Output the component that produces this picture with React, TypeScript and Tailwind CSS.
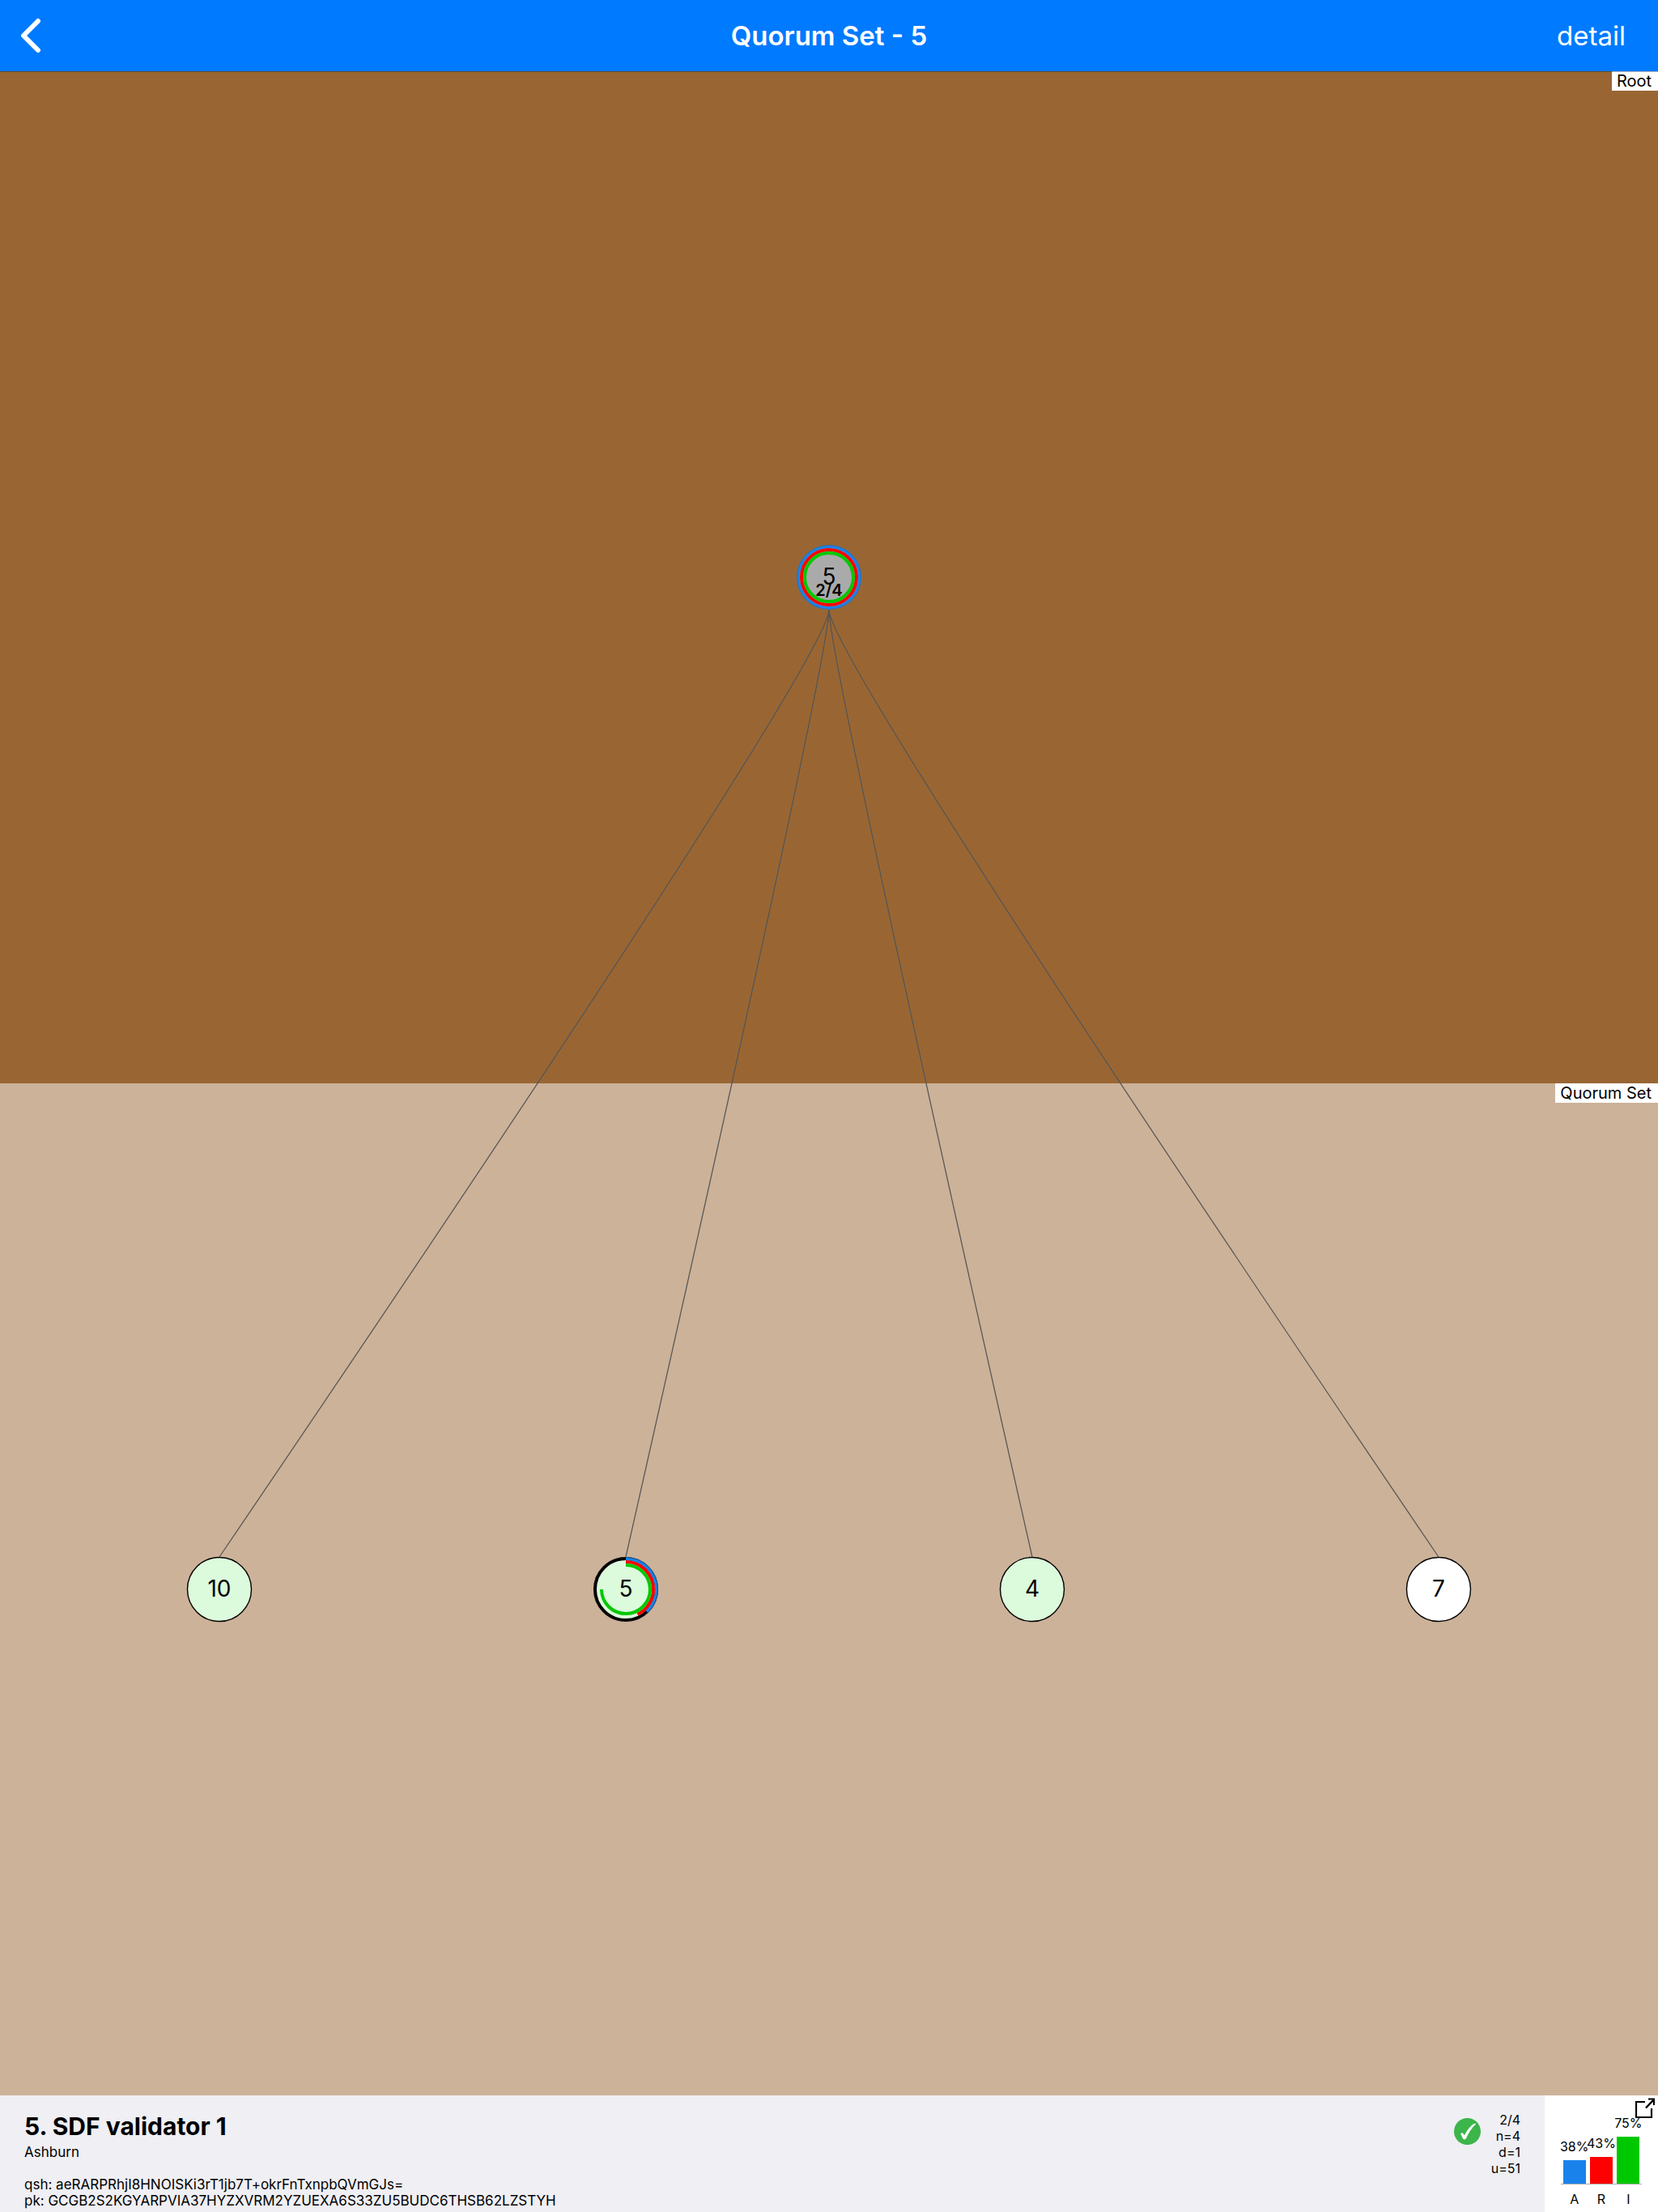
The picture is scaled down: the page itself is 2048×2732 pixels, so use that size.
import React from "react";

type Metric = { label: string; name: string; percent: number; color: string };

const METRICS: Metric[] = [
  { label: "A", name: "Active", percent: 38, color: "#1982eb" },
  { label: "R", name: "Overloaded", percent: 43, color: "#ff0000" },
  { label: "I", name: "Validating", percent: 75, color: "#00c800" },
];

const FULL_RINGS = METRICS.map((m) => ({ color: m.color, percent: 100 }));

type Ring = { color: string; percent: number };

type NodeProps = {
  label: string;
  fill: string;
  outline?: string;
  track?: boolean;
  rings?: Ring[];
  threshold?: string;
};

function RingArc({ ring, index }: { ring: Ring; index: number }) {
  const r = 38 - index * 4;
  return (
    <circle
      cx={40}
      cy={40}
      r={r}
      fill="none"
      stroke={ring.color}
      strokeWidth={4}
      pathLength={100}
      strokeDasharray={ring.percent === 100 ? undefined : `${ring.percent} 100`}
      transform="rotate(-90 40 40)"
    />
  );
}

function QuorumNode({ label, fill, outline = "#000", track, rings = [], threshold }: NodeProps) {
  return (
    <button type="button" className="relative flex size-20 items-center justify-center rounded-full">
      <svg viewBox="0 0 80 80" className="absolute inset-0 size-full overflow-visible" aria-hidden="true">
        <circle cx={40} cy={40} r={39.5} fill={fill} />
        {track && <circle cx={40} cy={40} r={38} fill="none" stroke="#000" strokeWidth={4} />}
        {rings.map((ring, i) => (
          <RingArc key={ring.color} ring={ring} index={i} />
        ))}
        <circle
          cx={40}
          cy={40}
          r={39.5}
          fill="none"
          stroke={outline}
          strokeWidth={rings.length ? 0.5 : 1.4}
        />
      </svg>
      <span className="relative pb-[2px] text-[28px] leading-8">{label}</span>
      {threshold && (
        <span className="absolute inset-x-0 bottom-3 text-center text-[20px] leading-6 font-semibold">{threshold}</span>
      )}
    </button>
  );
}

function LayerTag({ children }: { children: React.ReactNode }) {
  return (
    <div className="absolute top-0 right-0 bg-white pr-2 pl-[6px] text-[20px] leading-6">{children}</div>
  );
}

const CHILD_X = [271, 773, 1275, 1777];

function Links() {
  return (
    <svg
      viewBox="0 0 2048 2500"
      preserveAspectRatio="none"
      className="pointer-events-none absolute inset-0 size-full"
      aria-hidden="true"
    >
      {CHILD_X.map((x) => (
        <path
          key={x}
          d={`M1024 665 Q1024 725 ${x} 1835`}
          fill="none"
          stroke="#555"
          strokeWidth={1.25}
          vectorEffect="non-scaling-stroke"
        />
      ))}
    </svg>
  );
}

function MetricChart() {
  return (
    <div className="relative flex w-[140px] shrink-0 flex-col items-center justify-end bg-white pb-[6px]">
      <div className="flex w-[100px] items-end border-b border-[#aaa]">
        {METRICS.map((m) => (
          <div key={m.label} className="flex min-w-0 flex-1 flex-col items-center">
            <span className="pb-[7px] text-[16px] leading-5 whitespace-nowrap">{m.percent}%</span>
            <div
              className="w-7"
              title={m.name}
              style={{ height: Math.round(m.percent * 0.77), backgroundColor: m.color }}
            />
          </div>
        ))}
      </div>
      <div className="flex w-[100px] pt-2 text-center text-[16px] leading-5">
        {METRICS.map((m) => (
          <span key={m.label} className="flex-1">
            {m.label}
          </span>
        ))}
      </div>
      <button type="button" aria-label="Open details" className="absolute top-[3px] right-1">
        <svg width="24" height="25" viewBox="0 0 24 25" fill="none" stroke="#000" strokeWidth="2.200">
          <path d="M12 5H1v19h19V13" />
          <path d="M13 12.500 23 2" strokeWidth="2.500" />
          <path d="M16 1.500h7V9" />
        </svg>
      </button>
    </div>
  );
}

export default function App() {
  return (
    <div className="flex min-h-screen flex-col bg-white font-['Inter',sans-serif] text-black">
      <header className="relative z-10 grid h-[88px] grid-cols-[1fr_auto_1fr] items-center bg-[#007aff] text-white shadow-[0_1px_0_rgba(0,0,0,0.3)]">
        <button type="button" aria-label="Back" className="justify-self-start pl-6">
          <svg
            width="28"
            height="44"
            viewBox="0 0 28 44"
            fill="none"
            stroke="currentColor"
            strokeWidth="6"
            strokeLinecap="round"
            strokeLinejoin="round"
          >
            <path d="M23 4 5 22 23 40" />
          </svg>
        </button>
        <h1 className="text-[33px] leading-10 font-semibold">Quorum Set - 5</h1>
        <button type="button" className="justify-self-end pr-10 text-[33px] leading-10">
          detail
        </button>
      </header>

      <main className="relative flex flex-1 flex-col">
        <section className="relative flex flex-1 items-center justify-center bg-[#996633]">
          <LayerTag>Root</LayerTag>
          <QuorumNode label="5" fill="#aaaaaa" outline="#555" rings={FULL_RINGS} threshold="2/4" />
        </section>
        <section className="relative grid flex-1 grid-cols-4 place-items-center bg-[#ccb299] px-5">
          <LayerTag>Quorum Set</LayerTag>
          <QuorumNode label="10" fill="#dcfadc" />
          <QuorumNode label="5" fill="#dcfadc" outline="#222" track rings={METRICS} />
          <QuorumNode label="4" fill="#dcfadc" />
          <QuorumNode label="7" fill="#ffffff" />
        </section>
        <Links />
      </main>

      <footer className="flex h-36 bg-[#efeff4]">
        <div className="flex min-w-0 flex-1 flex-col pt-[18px] pl-[30px] text-[17px] leading-5">
          <h2 className="pb-[2px] text-[30px] leading-10 font-bold">5. SDF validator 1</h2>
          <p>Ashburn</p>
          <p className="pt-5">qsh: aeRARPRhjI8HNOISKi3rT1jb7T+okrFnTxnpbQVmGJs=</p>
          <p>pk: GCGB2S2KGYARPVIA37HYZXVRM2YZUEXA6S33ZU5BUDC6THSB62LZSTYH</p>
        </div>
        <div className="flex w-[112px] shrink-0 items-start justify-between pt-5 pr-[30px]">
          <svg width="33" height="33" viewBox="0 0 33 33" className="mt-2" role="img" aria-label="Valid">
            <circle cx="16.500" cy="16.500" r="16.500" fill="#3cb54a" />
            <path
              d="M8.500 19.500c1-1 2.500-1 3 .5l1.300 2.500C15.500 16.500 19.500 11 24 7.800c.8-.6 2.300-.8 2.600-.4C21.500 12 17 19 14.600 25c-.4 1-2.300 1.300-3 .6-.8-1.200-1.400-3.600-3.100-6.100z"
              fill="#fff"
              stroke="#fff"
              strokeWidth="1"
            />
          </svg>
          <div className="text-right text-[16px] leading-5">
            <p>2/4</p>
            <p>n=4</p>
            <p>d=1</p>
            <p>u=51</p>
          </div>
        </div>
        <MetricChart />
      </footer>
    </div>
  );
}
